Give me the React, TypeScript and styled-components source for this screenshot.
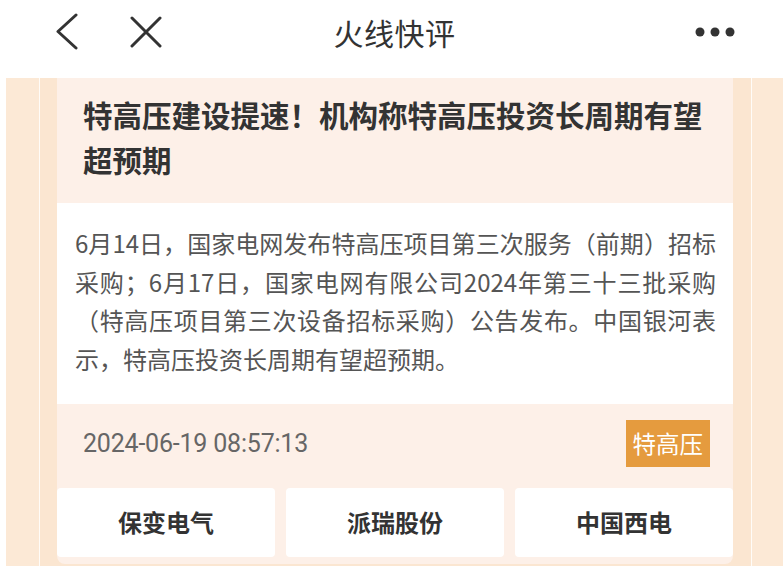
import React from "react";
import styled, { createGlobalStyle } from "styled-components";

const Global = createGlobalStyle`
  html, body { margin: 0; padding: 0; background: #ffffff; }
  body { font-family: "Noto Sans CJK SC", "Noto Sans", sans-serif; color: #333; }
  * { box-sizing: border-box; }
`;

const Page = styled.div`
  width: 783px;
  height: 566px;
  overflow: hidden;
  display: flex;
  flex-direction: column;
  background: #ffffff;
`;

const TopBar = styled.div`
  height: 78px;
  flex: none;
  background: #ffffff;
`;

const NavRow = styled.div`
  height: 64px;
  display: grid;
  grid-template-columns: 200px 1fr 200px;
  align-items: center;
`;

const NavLeft = styled.div`
  display: flex;
  align-items: center;
  gap: 50px;
  padding-left: 54px;
`;

const NavTitle = styled.div`
  text-align: center;
  font-size: 30px;
  color: #333;
  padding-left: 6px;
  letter-spacing: 0.5px;
`;

const NavRight = styled.div`
  display: flex;
  justify-content: flex-end;
  padding-right: 48px;
`;

const Main = styled.div`
  flex: 1;
  margin-left: 6px;
  background: #fce9d6;
  display: flex;
`;

const Rail = styled.div`
  flex: 1;
  margin: 0 31px 0 33px;
  padding: 0 18px 0 17px;
  border-left: 1px solid rgba(255, 255, 255, 0.85);
  border-right: 1px solid rgba(255, 255, 255, 0.85);
  background: #fbe6d1;
`;

const Card = styled.div`
  width: 676px;
  background: #fdf0e8;
  border-radius: 0 0 8px 8px;
  padding-bottom: 7px;
`;

const Title = styled.h1`
  margin: 0;
  padding: 14px 24px 21px 26px;
  font-size: 29.5px;
  line-height: 45px;
  font-weight: 700;
  color: #333;
`;

const Body = styled.div`
  background: #ffffff;
  padding: 21px 17px 26px 18px;
  font-size: 24px;
  line-height: 38.5px;
  color: #555;
  text-align: justify;
`;

const Footer = styled.div`
  display: flex;
  align-items: center;
  justify-content: space-between;
  padding: 16px 23px 21px 26px;
`;

const Time = styled.span`
  font-family: Roboto, "Liberation Sans", sans-serif;
  font-size: 25px;
  color: #666;
  letter-spacing: -0.2px;
`;

const Tag = styled.span`
  background: #e59b3e;
  color: #ffffff;
  font-size: 23.5px;
  line-height: 47px;
  height: 47px;
  padding: 0 7px;
`;

const Stocks = styled.div`
  display: grid;
  grid-template-columns: repeat(3, 1fr);
  gap: 11px;
`;

const Stock = styled.div`
  height: 69px;
  padding-bottom: 3px;
  background: #ffffff;
  border-radius: 4px;
  display: flex;
  align-items: center;
  justify-content: center;
  font-size: 24px;
  font-weight: 700;
  color: #333;
`;

const stocks = ["保变电气", "派瑞股份", "中国西电"];

export default function App() {
  return (
    <>
      <Global />
      <Page>
        <TopBar>
          <NavRow>
            <NavLeft>
              <svg width="26" height="38" viewBox="0 0 26 38">
                <path d="M22 2 L4 18.5 L22 35" fill="none" stroke="#333" strokeWidth="3" strokeLinecap="round" strokeLinejoin="round" />
              </svg>
              <svg width="32" height="32" viewBox="0 0 32 32">
                <path d="M2 2 L30 30 M30 2 L2 30" fill="none" stroke="#333" strokeWidth="3" strokeLinecap="round" />
              </svg>
            </NavLeft>
            <NavTitle>火线快评</NavTitle>
            <NavRight>
              <svg width="40" height="10" viewBox="0 0 40 10">
                <circle cx="5" cy="5" r="4.5" fill="#333" />
                <circle cx="20" cy="5" r="4.5" fill="#333" />
                <circle cx="35" cy="5" r="4.5" fill="#333" />
              </svg>
            </NavRight>
          </NavRow>
        </TopBar>
        <Main>
          <Rail>
            <Card>
              <Title>特高压建设提速！机构称特高压投资长周期有望超预期</Title>
              <Body>
                6月14日，国家电网发布特高压项目第三次服务（前期）招标采购；6月17日，国家电网有限公司2024年第三十三批采购（特高压项目第三次设备招标采购）公告发布。中国银河表示，特高压投资长周期有望超预期。
              </Body>
              <Footer>
                <Time>2024-06-19 08:57:13</Time>
                <Tag>特高压</Tag>
              </Footer>
              <Stocks>
                {stocks.map((s) => (
                  <Stock key={s}>{s}</Stock>
                ))}
              </Stocks>
            </Card>
          </Rail>
        </Main>
      </Page>
    </>
  );
}
